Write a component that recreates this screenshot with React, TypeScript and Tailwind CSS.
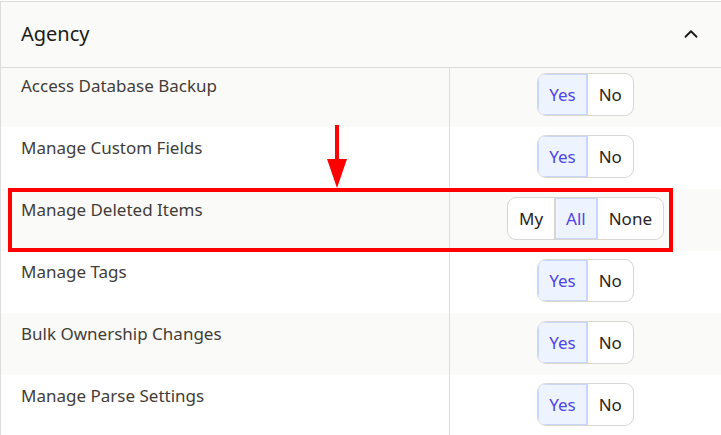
import React from 'react';
import { ChevronUp } from 'lucide-react';

type Option = { label: string; active?: boolean };

interface Permission {
  name: string;
  options: Option[];
}

const yesNo: Option[] = [{ label: 'Yes', active: true }, { label: 'No' }];

const permissions: Permission[] = [
  { name: 'Access Database Backup', options: yesNo },
  { name: 'Manage Custom Fields', options: yesNo },
  { name: 'Manage Deleted Items', options: [{ label: 'My' }, { label: 'All', active: true }, { label: 'None' }] },
  { name: 'Manage Tags', options: yesNo },
  { name: 'Bulk Ownership Changes', options: yesNo },
  { name: 'Manage Parse Settings', options: yesNo },
];

const SegmentedControl = ({ options }: { options: Option[] }) => (
  <div className="flex h-[43px] rounded-[9px] border border-[#d9d6d3] bg-white overflow-hidden">
    {options.map((opt, i) => (
      <button
        key={opt.label}
        type="button"
        className={
          (i > 0 ? 'border-l border-[#d9d6d3] ' : '') +
          (opt.active
            ? 'bg-[#eef4ff] text-[#4f46e5] shadow-[inset_0_0_0_1px_#c9d7fd] '
            : 'text-[#2a2522] ') +
          'px-[11px] text-[17px] leading-none'
        }
      >
        {opt.label}
      </button>
    ))}
  </div>
);

const App = () => {
  return (
    <div
      className="h-[435px] overflow-hidden bg-white pt-px"
      style={{ fontFamily: '"Noto Sans", sans-serif' }}
    >
      <div className="relative border-l border-t border-[#dcdcdc]">
        <div className="flex h-[66px] items-center justify-between border-b border-[#dcdcdc] bg-[#fafaf9] pl-[20px] pr-[19px]">
          <h2 className="text-[20px] leading-7 text-[#1c1917] -mt-[2px]">Agency</h2>
          <ChevronUp size={22} strokeWidth={2} className="text-[#1c1917] -mt-px" />
        </div>

        {permissions.map((p, i) => (
          <div
            key={p.name}
            className={
              'flex ' +
              (i === 0 ? 'h-[59px] ' : 'h-[62px] ') +
              (i % 2 === 0 ? 'bg-[#fafaf9]' : 'bg-white')
            }
          >
            <div
              className={
                'w-[448px] pl-[20px] text-[17px] leading-6 text-[#433d38] ' +
                (i === 0 ? 'pt-[6px]' : 'pt-[9px]')
              }
            >
              {p.name}
            </div>
            <div
              className={
                'flex flex-1 justify-center border-l border-[#dcdcdc] ' +
                (i === 0 ? 'pt-[5px]' : 'pt-[8px]')
              }
            >
              <SegmentedControl options={p.options} />
            </div>
          </div>
        ))}

        {/* annotation: highlight box + arrow */}
        <div className="pointer-events-none absolute left-[7px] top-[186px] h-[64px] w-[665px] border-4 border-[#ff0000]" />
        <div className="pointer-events-none absolute left-[334px] top-[123px] h-[35px] w-[4px] bg-[#ff0000]" />
        <svg
          className="pointer-events-none absolute left-[326px] top-[157px]"
          width="20"
          height="29"
          viewBox="0 0 20 29"
        >
          <polygon points="0,0 20,0 10,29" fill="#ff0000" />
        </svg>
      </div>
    </div>
  );
};

export default App;
